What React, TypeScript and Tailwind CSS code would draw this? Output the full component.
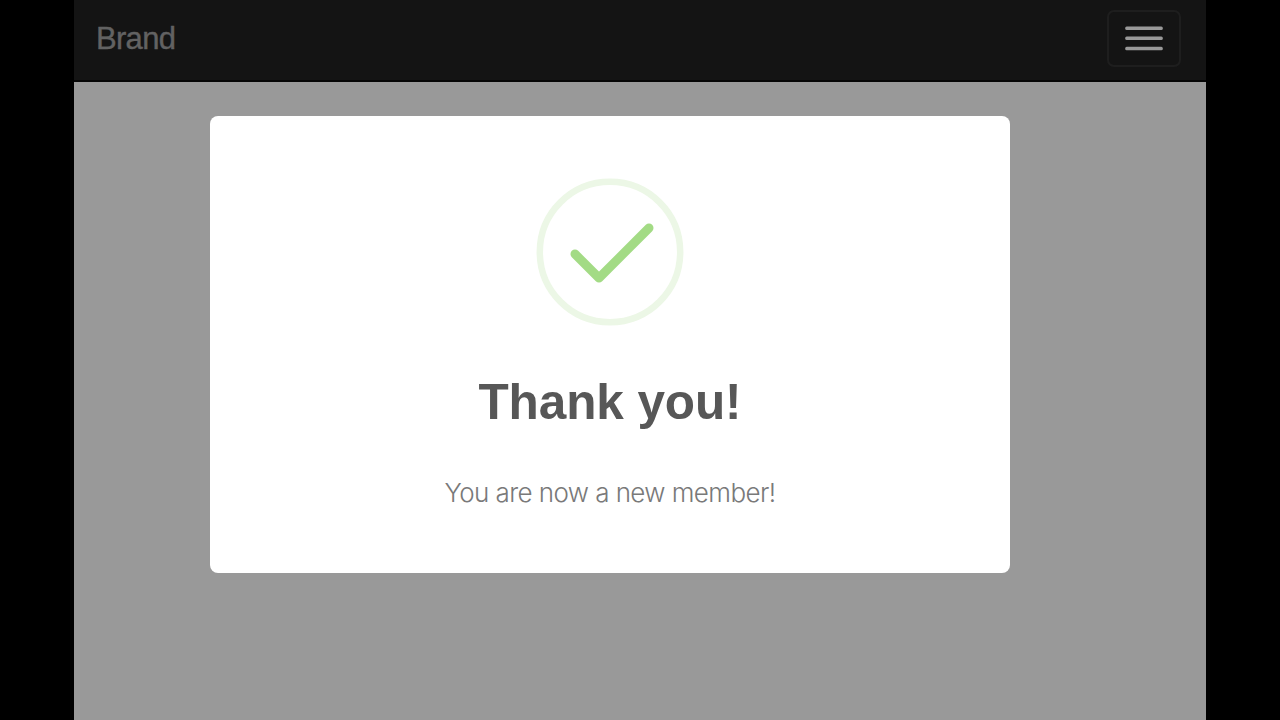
function Navbar() {
  return (
    <nav className="flex h-[82px] items-start justify-between border-b-2 border-[#060606] bg-[#141414] pl-[22px] pr-[25px] pt-[10px]">
      <a
        href="#"
        className="mt-[9px] text-[31px] leading-[40px] tracking-[-0.7px] text-[#626262] [-webkit-text-stroke:0.4px_#626262]"
      >
        Brand
      </a>
      <button
        type="button"
        aria-label="Toggle navigation"
        className="flex h-[57px] w-[74px] items-center justify-center rounded-[7px] border-2 border-[#1e1e1e]"
      >
        <svg viewBox="0 0 38 25" className="h-[25px] w-[38px]" fill="#999999">
          <rect x="0.2" y="0.5" width="37.6" height="3.5" rx="1.5" />
          <rect x="0.2" y="10.6" width="37.6" height="3.5" rx="1.5" />
          <rect x="0.2" y="20.8" width="37.6" height="3.5" rx="1.5" />
        </svg>
      </button>
    </nav>
  );
}

function SuccessIcon() {
  return (
    <svg viewBox="0 0 148 148" className="h-[148px] w-[148px]" fill="none">
      <circle cx="74" cy="74" r="70.2" stroke="#ecf7e6" strokeWidth="6.5" />
      <path
        d="M39 76 63 100 113 50"
        stroke="#a3db85"
        strokeWidth="9"
        strokeLinecap="round"
        strokeLinejoin="round"
      />
    </svg>
  );
}

export default function App() {
  return (
    <div className="flex h-screen justify-center overflow-hidden bg-black font-['Liberation_Sans',Arial,sans-serif]">
      <div className="flex w-[1132px] flex-col bg-[#999999]">
        <Navbar />
        <div
          role="dialog"
          className="ml-[136px] mt-[34px] flex h-[457px] w-[800px] flex-col items-center rounded-[8px] bg-white pt-[62px]"
        >
          <SuccessIcon />
          <h2 className="mt-[46px] whitespace-nowrap text-[49.5px] font-bold leading-[60px] tracking-[-0.1px] text-[#575757]">
            Thank you!
          </h2>
          <p className="mt-[43px] whitespace-nowrap font-['Inter','Liberation_Sans',sans-serif] text-[26px] font-light leading-[36px] tracking-[-0.58px] text-[#797979]">
            You are now a new member!
          </p>
        </div>
      </div>
    </div>
  );
}
